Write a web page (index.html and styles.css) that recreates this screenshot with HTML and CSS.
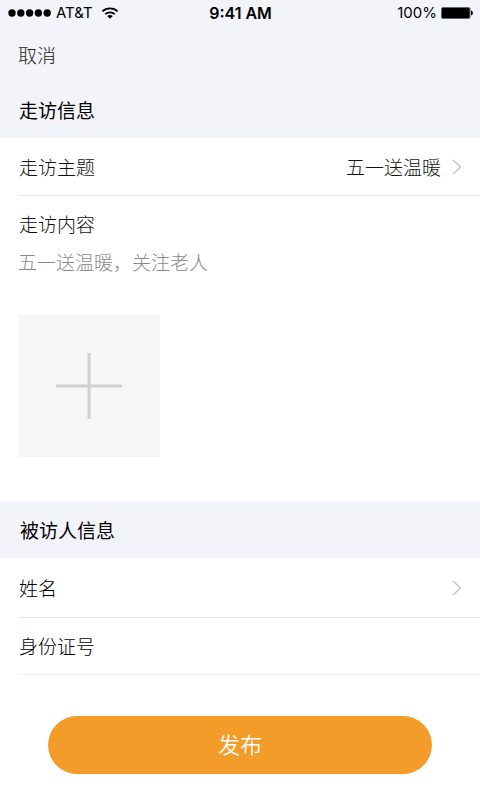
FILE: index.html
```html
<!DOCTYPE html>
<html lang="zh-CN">
<head>
<meta charset="utf-8">
<meta name="viewport" content="width=device-width, initial-scale=1">
<title>走访信息</title>
<link rel="stylesheet" href="styles.css">
</head>
<body>
<header class="top">
  <div class="status">
    <div class="status-left">
      <svg class="signal" width="44" height="8" viewBox="0 0 44 8" aria-hidden="true">
        <circle cx="4" cy="4" r="3.7"/><circle cx="12.8" cy="4" r="3.7"/><circle cx="21.6" cy="4" r="3.7"/><circle cx="30.4" cy="4" r="3.7"/><circle cx="39.2" cy="4" r="3.7"/>
      </svg>
      <span class="carrier">AT&amp;T</span>
      <svg class="wifi" width="18" height="12" viewBox="0 0 18 12" aria-hidden="true">
        <path d="M1.4 4.4C5.6.4 12.4.4 16.6 4.4M4.2 7.2C6.9 4.7 11.1 4.7 13.8 7.2" fill="none" stroke="#000" stroke-width="1.8"/>
        <path d="M9 11.8 6.2 9.1C7.8 7.7 10.2 7.7 11.8 9.1Z"/>
      </svg>
    </div>
    <span class="time">9:41 AM</span>
    <div class="status-right">
      <span>100%</span>
      <svg width="32" height="12" viewBox="0 0 32 12" aria-hidden="true">
        <rect x=".5" y=".5" width="28.5" height="11" rx="1.5" fill="#000" stroke="#666"/>
        <path d="M30 3.6Q32 4.2 32 6T30 8.4Z"/>
      </svg>
    </div>
  </div>
  <nav class="nav"><button class="cancel" type="button">取消</button></nav>
</header>
<form class="form">
  <h2 class="section">走访信息</h2>
  <div class="row">
    <span id="topic">走访主题</span>
    <button class="pick" type="button" aria-labelledby="topic topic-value">
      <span id="topic-value">五一送温暖</span>
      <svg class="chevron" width="10" height="16" viewBox="0 0 10 16" aria-hidden="true"><path d="M1 1 8.5 8 1 15"/></svg>
    </button>
  </div>
  <div class="content">
    <label id="content-label" for="content">走访内容</label>
    <textarea id="content" placeholder="五一送温暖，关注老人"></textarea>
    <button class="upload" type="button" aria-labelledby="content-label">
      <svg width="68" height="68" viewBox="0 0 68 68" aria-hidden="true"><path d="M34 1V67M1 34H67"/></svg>
    </button>
  </div>
  <h2 class="section person">被访人信息</h2>
  <div class="row dark tall">
    <span id="name">姓名</span>
    <button class="pick" type="button" aria-labelledby="name">
      <svg class="chevron" width="10" height="16" viewBox="0 0 10 16" aria-hidden="true"><path d="M1 1 8.5 8 1 15"/></svg>
    </button>
  </div>
  <div class="row dark last">
    <label for="idno">身份证号</label>
    <input id="idno" type="text">
  </div>
  <button class="submit" type="submit">发布</button>
</form>
</body>
</html>
```
FILE: styles.css
```css
* { box-sizing: border-box; }
body {
  margin: 0;
  background: #fff;
  color: #111;
  font: 300 19px/28px "Noto Sans CJK SC", sans-serif;
}
button, input, textarea {
  margin: 0;
  padding: 0;
  border: 0;
  background: none;
  color: inherit;
  font: inherit;
}
button { cursor: pointer; }
.top { background: #f3f4f9; }
.status {
  display: grid;
  grid-template-columns: 1fr auto 1fr;
  align-items: center;
  height: 26px;
  padding: 0 7px 0 8px;
  color: #000;
  font: 400 15px/26px Inter, sans-serif;
}
.status-left, .status-right { display: flex; align-items: center; }
.status-left { gap: 4px; }
.wifi { margin-left: 4px; }
.status-right { justify-content: flex-end; gap: 4px; }
.time { font-size: 16px; font-weight: 600; }
.nav { padding: 15px 18px; }
.cancel { display: block; color: #222; }
.section {
  margin: 0;
  padding: 12px 19px 14px;
  background: #f3f4f9;
  color: #000;
  font-size: 19px;
  font-weight: 400;
  line-height: 28px;
}
.row {
  display: flex;
  align-items: center;
  height: 58px;
  margin-left: 19px;
  padding-right: 18px;
  border-bottom: 1px solid #e4e4e4;
}
.tall { height: 60px; }
.last { height: 57px; border-color: #eee; }
.dark { color: #000; }
.pick {
  display: flex;
  flex: 1;
  align-items: center;
  justify-content: flex-end;
  gap: 11px;
  height: 100%;
}
.chevron path { fill: none; stroke: #c8c8cc; stroke-width: 1.6; }
.content { padding: 14px 18px 44px; }
.content label { display: block; padding-left: 1px; }
.content textarea {
  display: block;
  width: 100%;
  height: 56px;
  margin: 10px 0 11px;
  outline: 0;
  resize: none;
}
.content textarea::placeholder { color: #888; opacity: 1; }
.upload {
  display: grid;
  place-items: center;
  width: 142px;
  height: 142px;
  background: #f6f6f6;
}
.upload path { fill: none; stroke: #d0d0d0; stroke-width: 3; }
.person { padding: 15px 20px 14px; }
.row input { flex: 1; min-width: 0; margin-left: 16px; outline: 0; }
.submit {
  display: block;
  width: 80%;
  height: 58px;
  margin: 41px auto 26px;
  padding-bottom: 4px;
  border-radius: 29px;
  background: #f39c2a;
  color: #fff;
  font-size: 22px;
  font-weight: 350;
}
```
